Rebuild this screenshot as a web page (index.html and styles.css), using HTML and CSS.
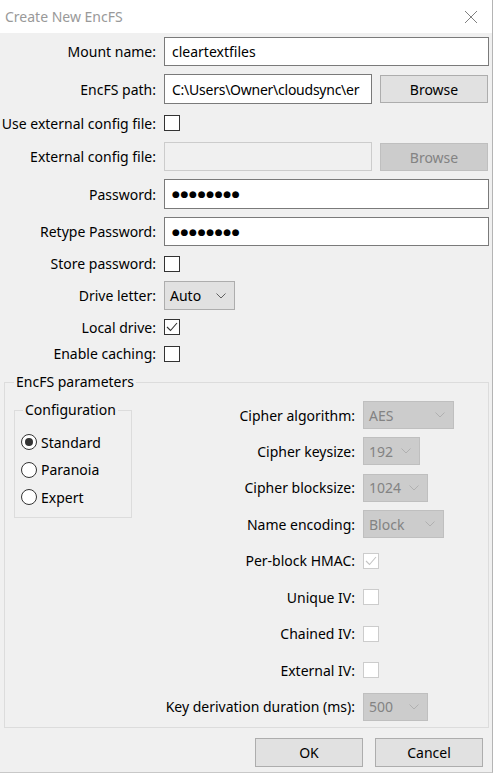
FILE: index.html
```html
<!DOCTYPE html>
<html lang="en">
<head>
  <meta charset="UTF-8" />
  <title>Create New EncFS</title>
  <link rel="stylesheet" href="styles.css">
</head>
<body>
  <div class="dialog">
    <div class="titlebar">
      <span class="title">Create New EncFS</span>
      <svg class="close" width="14" height="14" viewBox="0 0 14 14">
        <path d="M1 1 L13 13 M13 1 L1 13" stroke="#808080" stroke-width="1" fill="none"/>
      </svg>
    </div>

    <div class="form">
      <label class="lbl">Mount name:</label>
      <div class="edit">cleartextfiles</div>

      <label class="lbl">EncFS path:</label>
      <div class="pick">
        <div class="edit path">C:\Users\Owner\cloudsync\er</div>
        <button class="btn">Browse</button>
      </div>

      <label class="lbl">Use external config file:</label>
      <div class="cell"><span class="check"></span></div>

      <label class="lbl">External config file:</label>
      <div class="pick">
        <div class="edit off"></div>
        <button class="btn off">Browse</button>
      </div>

      <label class="lbl">Password:</label>
      <div class="edit dots">●●●●●●●●</div>

      <label class="lbl">Retype Password:</label>
      <div class="edit dots">●●●●●●●●</div>

      <label class="lbl">Store password:</label>
      <div class="cell"><span class="check"></span></div>

      <label class="lbl">Drive letter:</label>
      <div class="cell">
        <div class="combo w-drive">Auto
          <svg class="arrow" width="10" height="6" viewBox="0 0 10 6"><path d="M0.5 0.5 L5 5 L9.5 0.5" stroke="#606060" fill="none"/></svg>
        </div>
      </div>

      <label class="lbl">Local drive:</label>
      <div class="cell">
        <span class="check">
          <svg width="14" height="14" viewBox="0 0 14 14"><path d="M2 7 L5.5 10.5 L12 3" stroke="#333" stroke-width="1.1" fill="none"/></svg>
        </span>
      </div>

      <label class="lbl">Enable caching:</label>
      <div class="cell"><span class="check"></span></div>
    </div>

    <fieldset class="group params">
      <legend>EncFS parameters</legend>
      <div class="params-body">
        <fieldset class="group config">
          <legend>Configuration</legend>
          <div class="radios">
            <div class="radio-row"><span class="radio on"></span>Standard</div>
            <div class="radio-row"><span class="radio"></span>Paranoia</div>
            <div class="radio-row"><span class="radio"></span>Expert</div>
          </div>
        </fieldset>

        <div class="opts">
          <label class="lbl">Cipher algorithm:</label>
          <div class="cell"><div class="combo off w-aes">AES
            <svg class="arrow" width="10" height="6" viewBox="0 0 10 6"><path d="M0.5 0.5 L5 5 L9.5 0.5" stroke="#b0b0b0" fill="none"/></svg></div></div>

          <label class="lbl">Cipher keysize:</label>
          <div class="cell"><div class="combo off w-key">192
            <svg class="arrow" width="10" height="6" viewBox="0 0 10 6"><path d="M0.5 0.5 L5 5 L9.5 0.5" stroke="#b0b0b0" fill="none"/></svg></div></div>

          <label class="lbl">Cipher blocksize:</label>
          <div class="cell"><div class="combo off w-num">1024
            <svg class="arrow" width="10" height="6" viewBox="0 0 10 6"><path d="M0.5 0.5 L5 5 L9.5 0.5" stroke="#b0b0b0" fill="none"/></svg></div></div>

          <label class="lbl">Name encoding:</label>
          <div class="cell"><div class="combo off w-enc">Block
            <svg class="arrow" width="10" height="6" viewBox="0 0 10 6"><path d="M0.5 0.5 L5 5 L9.5 0.5" stroke="#b0b0b0" fill="none"/></svg></div></div>

          <label class="lbl">Per-block HMAC:</label>
          <div class="cell">
            <span class="check off">
              <svg width="14" height="14" viewBox="0 0 14 14"><path d="M2 7 L5.5 10.5 L12 3" stroke="#c4c4c4" stroke-width="1.1" fill="none"/></svg>
            </span>
          </div>

          <label class="lbl">Unique IV:</label>
          <div class="cell"><span class="check off"></span></div>

          <label class="lbl">Chained IV:</label>
          <div class="cell"><span class="check off"></span></div>

          <label class="lbl">External IV:</label>
          <div class="cell"><span class="check off"></span></div>

          <label class="lbl">Key derivation duration (ms):</label>
          <div class="cell"><div class="combo off w-num">500
            <svg class="arrow" width="10" height="6" viewBox="0 0 10 6"><path d="M0.5 0.5 L5 5 L9.5 0.5" stroke="#b0b0b0" fill="none"/></svg></div></div>
        </div>
      </div>
    </fieldset>

    <div class="actions">
      <button class="btn big">OK</button>
      <button class="btn big">Cancel</button>
    </div>
  </div>
</body>
</html>
```

FILE: styles.css
```css
body {
  margin: 0;
  background: #fff;
  font-family: 'Noto Sans', sans-serif;
  font-size: 14px;
  color: #000;
}
.dialog {
  width: 492px;
  height: 772px;
  background: #f0f0f0;
  border-right: 1px solid #b4b4b4;
  border-bottom: 1px solid #c8c8c8;
  overflow: hidden;
}
.titlebar {
  height: 33px;
  background: #fff;
  display: flex;
  align-items: center;
  justify-content: space-between;
  padding: 0 14px 0 5px;
}
.title {
  color: #999;
  font-size: 14px;
}
.form {
  display: grid;
  grid-template-columns: 152px 1fr;
  grid-template-rows: 29px 30px 22px 29px 30px 29px 19px 29px 18px 19px;
  column-gap: 8px;
  row-gap: 8px;
  padding: 4px 3px 0 4px;
}
.lbl {
  display: flex;
  align-items: center;
  justify-content: flex-end;
  white-space: nowrap;
}
.cell {
  display: flex;
  align-items: center;
}
.edit {
  box-sizing: border-box;
  height: 100%;
  background: #fff;
  border: 1px solid #7a7a7a;
  padding: 0 7px;
  display: flex;
  align-items: center;
  white-space: nowrap;
  overflow: hidden;
}
.edit.off {
  background: #f0f0f0;
  border-color: #cccccc;
}
.path {
  padding: 0 2px 0 7px;
  letter-spacing: -0.25px;
}
.dots {
  font-family: 'DejaVu Sans', sans-serif;
  font-size: 9px;
  letter-spacing: 0.7px;
}
.pick {
  display: flex;
  gap: 8px;
}
.pick .edit {
  width: 208px;
  flex: none;
}
.btn {
  box-sizing: border-box;
  width: 108px;
  height: 28px;
  margin-top: 1px;
  background: #e1e1e1;
  border: 1px solid #adadad;
  font-family: 'Noto Sans', sans-serif;
  font-size: 14px;
  color: #000;
  padding: 0;
}
.btn.off {
  background: #cccccc;
  border-color: #bfbfbf;
  color: #838383;
}
.check {
  box-sizing: border-box;
  width: 16px;
  height: 16px;
  border: 1px solid #333;
  background: #fff;
  display: flex;
  align-items: center;
  justify-content: center;
}
.check.off {
  border-color: #cccccc;
}
.combo {
  box-sizing: border-box;
  height: 29px;
  background: #e1e1e1;
  border: 1px solid #adadad;
  padding: 0 8px 0 5px;
  display: flex;
  align-items: center;
  justify-content: space-between;
}
.combo.off {
  height: 28px;
  background: #cccccc;
  border-color: #bfbfbf;
  color: #838383;
}
.w-drive { width: 71px; }
.w-aes { width: 91px; }
.w-key { width: 57px; }
.w-num { width: 65px; }
.w-enc { width: 81px; }

.group {
  border: 1px solid #dcdcdc;
  margin: 0;
  padding: 0;
  min-width: 0;
}
.group legend {
  line-height: 20px;
  padding: 0 2px;
  margin-left: 9px;
}
.params {
  margin: 9px 3px 0 4px;
  height: 356px;
  box-sizing: border-box;
}
.params-body {
  display: flex;
  align-items: flex-start;
}
.config {
  margin: 8px 0 0 9px;
  width: 118px;
  box-sizing: border-box;
  flex: none;
  padding: 0 0 10px 6px;
}
.config legend {
  margin-left: 2px;
}
.radios {
  display: flex;
  flex-direction: column;
  gap: 7.5px;
  margin-top: 12px;
}
.radio-row {
  height: 20px;
  display: flex;
  align-items: center;
  gap: 4px;
}
.radio {
  box-sizing: border-box;
  width: 16px;
  height: 16px;
  border: 1px solid #333;
  border-radius: 50%;
  background: #fff;
  display: flex;
  align-items: center;
  justify-content: center;
}
.radio.on::after {
  content: "";
  width: 8px;
  height: 8px;
  border-radius: 50%;
  background: #333;
}
.opts {
  flex: 1;
  display: grid;
  grid-template-columns: 1fr 125px;
  grid-auto-rows: 28px;
  column-gap: 8px;
  row-gap: 8.45px;
  margin-top: 9px;
}
.actions {
  display: flex;
  justify-content: flex-end;
  gap: 12px;
  padding: 10px 9px 0 0;
}
.btn.big {
  height: 29px;
  margin: 0;
}
```
